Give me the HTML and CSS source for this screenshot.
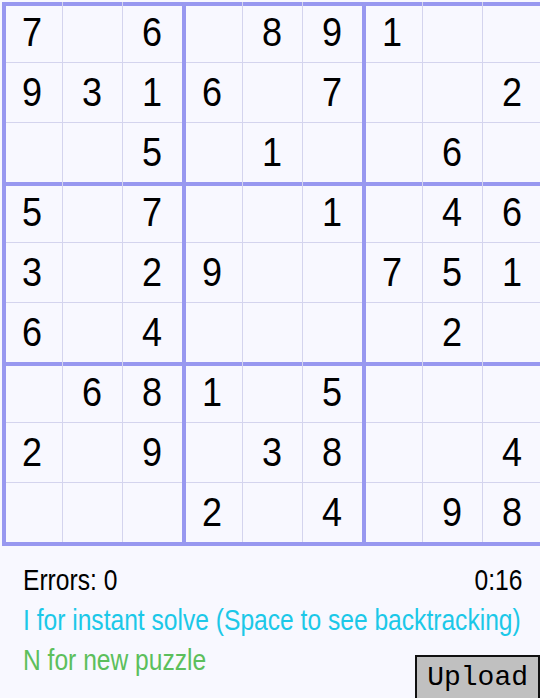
FILE: index.html
```html
<!DOCTYPE html>
<html>
<head>
<meta charset="utf-8">
<link rel="stylesheet" href="styles.css">
</head>
<body>
<div class="board">
  <div class="c tt tl"><span>7</span></div><div class="c tt"></div><div class="c tt"><span>6</span></div><div class="c tt tl"></div><div class="c tt"><span>8</span></div><div class="c tt"><span>9</span></div><div class="c tt tl"><span>1</span></div><div class="c tt"></div><div class="c tt"></div>
  <div class="c tl"><span>9</span></div><div class="c"><span>3</span></div><div class="c"><span>1</span></div><div class="c tl"><span>6</span></div><div class="c"></div><div class="c"><span>7</span></div><div class="c tl"></div><div class="c"></div><div class="c"><span>2</span></div>
  <div class="c tl"></div><div class="c"></div><div class="c"><span>5</span></div><div class="c tl"></div><div class="c"><span>1</span></div><div class="c"></div><div class="c tl"></div><div class="c"><span>6</span></div><div class="c"></div>
  <div class="c tt tl"><span>5</span></div><div class="c tt"></div><div class="c tt"><span>7</span></div><div class="c tt tl"></div><div class="c tt"></div><div class="c tt"><span>1</span></div><div class="c tt tl"></div><div class="c tt"><span>4</span></div><div class="c tt"><span>6</span></div>
  <div class="c tl"><span>3</span></div><div class="c"></div><div class="c"><span>2</span></div><div class="c tl"><span>9</span></div><div class="c"></div><div class="c"></div><div class="c tl"><span>7</span></div><div class="c"><span>5</span></div><div class="c"><span>1</span></div>
  <div class="c tl"><span>6</span></div><div class="c"></div><div class="c"><span>4</span></div><div class="c tl"></div><div class="c"></div><div class="c"></div><div class="c tl"></div><div class="c"><span>2</span></div><div class="c"></div>
  <div class="c tt tl"></div><div class="c tt"><span>6</span></div><div class="c tt"><span>8</span></div><div class="c tt tl"><span>1</span></div><div class="c tt"></div><div class="c tt"><span>5</span></div><div class="c tt tl"></div><div class="c tt"></div><div class="c tt"></div>
  <div class="c tl"><span>2</span></div><div class="c"></div><div class="c"><span>9</span></div><div class="c tl"></div><div class="c"><span>3</span></div><div class="c"><span>8</span></div><div class="c tl"></div><div class="c"></div><div class="c"><span>4</span></div>
  <div class="c tl"></div><div class="c"></div><div class="c"></div><div class="c tl"><span>2</span></div><div class="c"></div><div class="c"><span>4</span></div><div class="c tl"></div><div class="c"><span>9</span></div><div class="c"><span>8</span></div>
</div>
<div class="footer">
  <div class="row">
    <span class="txt">Errors: 0</span>
    <span class="txt right">0:16</span>
  </div>
  <div class="row">
    <span class="txt blue">I for instant solve (Space to see backtracking)</span>
  </div>
  <div class="row last">
    <span class="txt green">N for new puzzle</span>
    <button class="upload">Upload</button>
  </div>
</div>
</body>
</html>
```
FILE: styles.css
```css
html, body {
  margin: 0;
  padding: 0;
  overflow: hidden;
  background: #f8f8ff;
  width: 540px;
  height: 698px;
}

.board {
  display: grid;
  grid-template-columns: repeat(9, 60px);
  grid-template-rows: repeat(9, 60px);
  width: 540px;
  margin: 2px 0 0 2px;
  border-bottom: 4px solid #9898f0;
}

.c {
  --lw: 1px;
  --lc: #d4d4ee;
  --tw: 1px;
  --tc: #d4d4ee;
  box-shadow: inset var(--lw) 0 0 var(--lc), inset 0 var(--tw) 0 var(--tc);
  font-family: "Liberation Sans", Arial, sans-serif;
  font-size: 40px;
  line-height: 60px;
  text-align: center;
  color: #000;
}

.c span {
  display: inline-block;
  transform: scaleX(0.9);
}

.c.tl {
  --lw: 4px;
  --lc: #9898f0;
}

.c.tt {
  --tw: 4px;
  --tc: #9898f0;
}

.footer {
  padding: 14px 18px 0 23px;
  font-family: "Liberation Sans", Arial, sans-serif;
  font-size: 30px;
  line-height: 40px;
}

.row {
  display: flex;
  justify-content: space-between;
  align-items: flex-start;
  height: 40px;
}

.txt {
  display: inline-block;
  white-space: nowrap;
  transform: scaleX(0.82);
  transform-origin: left center;
  color: #000;
}

.txt.right {
  transform-origin: right center;
}

.blue {
  color: #1cc8e8;
}

.green {
  color: #5cbf5c;
}

.upload {
  margin: 15px -18px 0 0;
  padding: 5px 10px 8px 10px;
  border: 2px solid #111;
  background: #c0c0c0;
  font-family: "Liberation Mono", "Courier New", monospace;
  font-size: 28px;
  line-height: normal;
  color: #000;
  border-radius: 0;
}
```
